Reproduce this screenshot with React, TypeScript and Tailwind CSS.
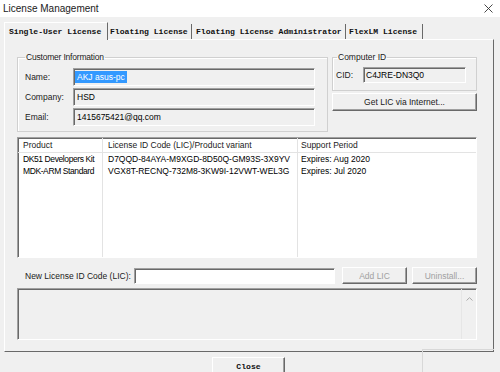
const sunken =
  'border border-t-[#a0a0a0] border-l-[#a0a0a0] border-r-white border-b-white shadow-[inset_1px_1px_0_#696969]'
const raised =
  'border border-t-white border-l-white border-r-[#696969] border-b-[#696969] shadow-[inset_-1px_-1px_0_#a0a0a0]'
const groupBox = 'border border-[#d0d0d0] shadow-[inset_1px_1px_0_#fff]'

const customer = [
  { label: 'Name:', value: 'AKJ asus-pc', selected: true },
  { label: 'Company:', value: 'HSD' },
  { label: 'Email:', value: '1415675421@qq.com' },
]

const licenses = [
  { product: 'DK51 Developers Kit', code: 'D7QQD-84AYA-M9XGD-8D50Q-GM93S-3X9YV', period: 'Expires: Aug 2020' },
  { product: 'MDK-ARM Standard', code: 'VGX8T-RECNQ-732M8-3KW9I-12VWT-WEL3G', period: 'Expires: Jul 2020' },
]

function Column({ title, width, pl, items, last, tight }: { title: string; width: string; pl: string; items: string[]; last?: boolean; tight?: boolean }) {
  return (
    <div className={`${width} flex flex-col ${last ? '' : 'border-r border-[#e3e3e3]'}`}>
      <div className={`h-[15px] shrink-0 border-b border-[#e3e3e3] ${pl} flex items-center text-[#1a1a1a]`}>{title}</div>
      <div className={`${pl} leading-[12px] ${tight ? 'tracking-[-0.4px]' : ''}`}>
        {items.map((t) => (
          <div key={t} className="h-[12px] whitespace-nowrap">{t}</div>
        ))}
      </div>
    </div>
  )
}

export default function App() {
  return (
    <div className="relative w-[500px] h-[372px] overflow-hidden bg-[#f0f0f0] font-['Liberation_Sans',Arial,sans-serif] text-[8.5px] leading-[10px] text-black">
      {/* title bar */}
      <div className="h-[17px] bg-white flex items-center justify-between pl-[3px] pr-[7px]">
        <span className="text-[10px] leading-[12px] text-[#1a1a1a]">License Management</span>
        <svg width="9" height="9" viewBox="0 0 9 9">
          <path d="M0.5 0.5l8 8M8.5 0.5l-8 8" stroke="#333" strokeWidth="0.9" />
        </svg>
      </div>

      {/* tabs */}
      <div className="h-[22px] flex items-end pl-[4px] font-['Liberation_Mono',monospace] text-[8.1px] font-bold text-[#111]">
        <div className="relative z-10 -mb-px h-[18px] w-[104px] bg-[#f0f0f0] border-l border-t border-r border-l-white border-t-white border-r-[#696969] pl-[4px] flex items-center whitespace-nowrap">
          Single-User License
        </div>
        <div className="h-[15px] w-[84px] border-r border-[#696969] pl-[2px] flex items-center whitespace-nowrap">Floating License</div>
        <div className="h-[15px] w-[154px] border-r border-[#696969] pl-[4px] flex items-center whitespace-nowrap">Floating License Administrator</div>
        <div className="h-[15px] w-[77px] border-r border-[#696969] pl-[3px] flex items-center whitespace-nowrap">FlexLM License</div>
      </div>

      {/* tab panel */}
      <div className="ml-[4px] w-[490px] border border-t-white border-l-white border-r-[#696969] border-b-[#696969] pt-[12px] pl-[12px] pr-[16px] pb-[11px]">
        <div className="flex gap-[4px]">
          <fieldset className={`w-[311px] ${groupBox} pl-[7px] pr-[12px] pt-[6px] pb-[5px]`}>
            <legend className="px-[1px] leading-[10px] text-[#1a1a1a] tracking-[-0.2px]">Customer Information</legend>
            <div className="flex flex-col gap-[2px]">
              {customer.map((row) => (
                <div key={row.label} className="flex items-center h-[18px]">
                  <span className="w-[48px] text-[#1a1a1a]">{row.label}</span>
                  <div className={`w-[242px] h-[18px] ${sunken} bg-[#f0f0f0] pl-[1px] flex items-center`}>
                    <span className={row.selected ? 'bg-[#3399ff] text-white px-[2px] leading-[12px]' : 'px-[2px]'}>{row.value}</span>
                  </div>
                </div>
              ))}
            </div>
          </fieldset>

          <div className="w-[145px] flex flex-col">
            <fieldset className={`${groupBox} pl-[3px] pr-[10px] pt-[5px] pb-[7px]`}>
              <legend className="ml-[1px] px-[1px] leading-[10px] text-[#1a1a1a]">Computer ID</legend>
              <div className="flex items-center">
                <span className="w-[27px] text-[#1a1a1a]">CID:</span>
                <div className={`w-[103px] h-[16px] ${sunken} bg-[#f0f0f0] pl-[2px] flex items-center`}>C4JRE-DN3Q0</div>
              </div>
            </fieldset>
            <button className={`mt-[2px] h-[18px] w-full ${raised} bg-[#f0f0f0] flex items-center justify-center text-[#1a1a1a]`}>
              Get LIC via Internet...
            </button>
          </div>
        </div>

        {/* license list */}
        <div className={`mt-[5px] h-[121px] ${sunken} bg-white flex`}>
          <Column title="Product" width="w-[85px]" pl="pl-[5px]" items={licenses.map((l) => l.product)} tight />
          <Column title="License ID Code (LIC)/Product variant" width="w-[195px]" pl="pl-[5px]" items={licenses.map((l) => l.code)} />
          <Column title="Support Period" width="flex-1" pl="pl-[3px]" items={licenses.map((l) => l.period)} last />
        </div>

        {/* new LIC row */}
        <div className="mt-[9px] h-[17px] flex items-center">
          <span className="pl-[8px] w-[117px] text-[#1a1a1a] whitespace-nowrap">New License ID Code (LIC):</span>
          <div className={`w-[201px] h-[16px] ${sunken} bg-white`} />
          <button className={`ml-[7px] w-[65px] h-[17px] ${raised} bg-[#f0f0f0] text-[#a0a0a0]`}>Add LIC</button>
          <button className={`ml-[5px] w-[65px] h-[17px] ${raised} bg-[#f0f0f0] text-[#a0a0a0]`}>Uninstall...</button>
        </div>

        {/* output box */}
        <div className={`mt-[4px] h-[52px] ${sunken} bg-[#f0f0f0] flex justify-end`}>
          <div className="w-[15px] h-full border-l border-[#e6e6e6] flex flex-col items-center pt-[8px]">
            <svg width="7" height="4" viewBox="0 0 7 4">
              <path d="M0.5 3.5L3.5 0.7L6.5 3.5" fill="none" stroke="#a8a8a8" strokeWidth="1" />
            </svg>
          </div>
        </div>
      </div>

      {/* close */}
      <div className="pl-[212px] pt-[5px]">
        <button className={`w-[73px] h-[20px] ${raised} bg-[#f0f0f0] font-['Liberation_Mono',monospace] text-[8.1px] font-bold text-[#111] flex items-start justify-center pt-[4px]`}>
          Close
        </button>
      </div>

      {/* faint overlay artifact at bottom right */}
      <div className="absolute left-[422px] top-[349px] w-[72px] h-[30px] border-l border-t border-[#d8d8d8]" />
    </div>
  )
}
